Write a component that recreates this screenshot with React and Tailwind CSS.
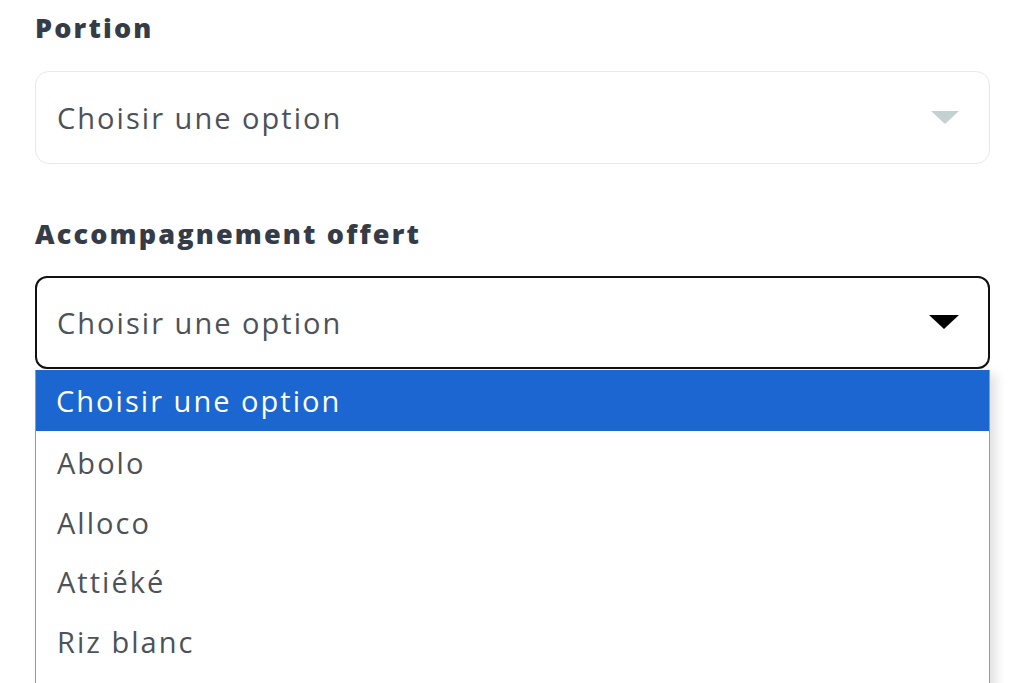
export default function App() {
  const options = ["Abolo", "Alloco", "Attiéké", "Riz blanc"];

  return (
    <div
      className="h-[683px] overflow-hidden bg-white px-[35px] pt-[10px]"
      style={{ fontFamily: '"Open Sans", "Noto Sans", sans-serif' }}
    >
      <div className="h-[36px] text-[27px] leading-[36px] font-extrabold tracking-[0.08em] text-[#353c48]">
        Portion
      </div>

      <div className="mt-[25px] flex h-[93px] w-[955px] items-center justify-between rounded-[14px] border border-[#e6e9ea] pl-[21px] pr-[30px]">
        <span className="text-[29px] tracking-[0.07em] text-[#4c5258]">Choisir une option</span>
        <svg width="28" height="14" viewBox="0 0 28 14">
          <path d="M0 0 H28 L14 13 Z" fill="#c3d1d1" />
        </svg>
      </div>

      <div className="mt-[52px] h-[36px] text-[27px] leading-[36px] font-extrabold tracking-[0.08em] text-[#353c48]">
        Accompagnement offert
      </div>

      <div className="mt-[24px] flex h-[93px] w-[955px] items-center justify-between rounded-[12px] border-2 border-[#111111] pl-[20px] pr-[29px]">
        <span className="text-[29px] tracking-[0.07em] text-[#4c5258]">Choisir une option</span>
        <svg width="30" height="15" viewBox="0 0 30 15">
          <path d="M0 0 H30 L15 14 Z" fill="#000000" />
        </svg>
      </div>

      <div className="mt-[1px] h-[400px] w-[955px] border-x border-[#9a9a9a] bg-white shadow-[6px_4px_10px_rgba(0,0,0,0.12)]">
        <div className="flex h-[61px] items-center bg-[#1b66d0] pl-[20px] text-[29px] tracking-[0.07em] text-white">
          Choisir une option
        </div>
        <div className="pt-[2px]">
          {options.map((o) => (
            <div
              key={o}
              className="flex h-[59.5px] items-center pl-[21px] text-[29px] tracking-[0.07em] text-[#4c5258]"
            >
              {o}
            </div>
          ))}
        </div>
      </div>
    </div>
  );
}
